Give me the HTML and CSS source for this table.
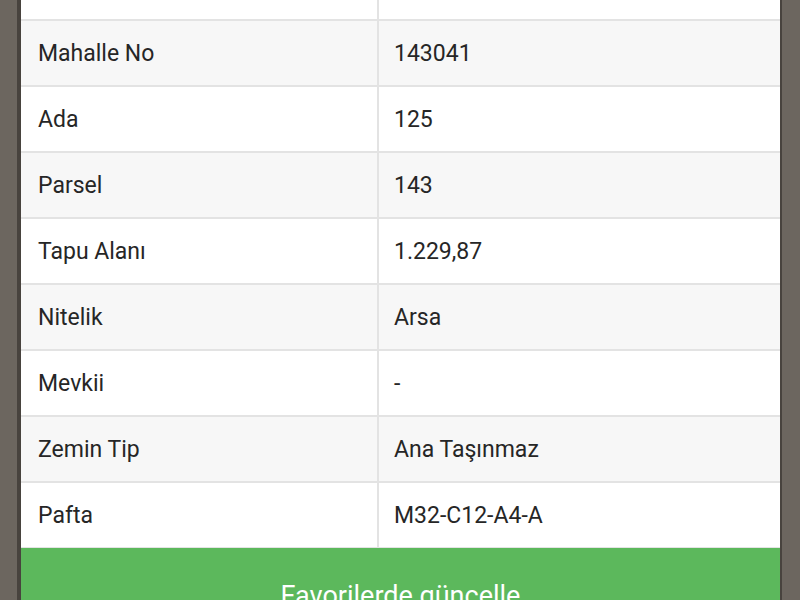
FILE: index.html
```html
<!DOCTYPE html>
<html lang="tr">
<head>
<meta charset="utf-8">
<title>Parsel</title>
<link rel="stylesheet" href="styles.css">
</head>
<body>
<div class="card">
  <div class="row"><div class="label">Mahalle / Köy</div><div class="value">Merkez</div></div>
  <div class="row alt"><div class="label">Mahalle No</div><div class="value">143041</div></div>
  <div class="row"><div class="label">Ada</div><div class="value">125</div></div>
  <div class="row alt"><div class="label">Parsel</div><div class="value">143</div></div>
  <div class="row"><div class="label">Tapu Alanı</div><div class="value">1.229,87</div></div>
  <div class="row alt"><div class="label">Nitelik</div><div class="value">Arsa</div></div>
  <div class="row"><div class="label">Mevkii</div><div class="value">-</div></div>
  <div class="row alt"><div class="label">Zemin Tip</div><div class="value">Ana Taşınmaz</div></div>
  <div class="row last"><div class="label">Pafta</div><div class="value">M32-C12-A4-A</div></div>
  <button class="fav">Favorilerde güncelle</button>
</div>
</body>
</html>
```
FILE: styles.css
```css
html, body {
  margin: 0;
  padding: 0;
  height: 100%;
  overflow: hidden;
}
body {
  background: #6c665f;
  font-family: Roboto, "Noto Sans", sans-serif;
}
.card {
  margin: -45px 0 0 21px;
  width: 759px;
  background: #fff;
  box-shadow: -4px 0 0 #48433e, 2px 0 0 #48433e;
  display: flex;
  flex-direction: column;
}
.row {
  display: grid;
  grid-template-columns: 358px 1fr;
  height: 64px;
  border-bottom: 2px solid #e3e3e3;
  background: #fff;
  color: #262626;
  font-size: 23px;
}
.row.alt {
  background: #f7f7f7;
}
.row.last {
  border-bottom: 1px solid #e3e3e3;
}
.label {
  display: flex;
  align-items: center;
  padding-left: 17px;
  border-right: 2px solid #e3e3e3;
}
.value {
  display: flex;
  align-items: center;
  padding-left: 15px;
}
.fav {
  border: 0;
  margin: 0;
  background: #5cb85c;
  color: #fff;
  font-family: Roboto, "Noto Sans", sans-serif;
  font-size: 27px;
  line-height: 32px;
  padding: 32px 0 30px;
  text-align: center;
  width: 100%;
}
```
